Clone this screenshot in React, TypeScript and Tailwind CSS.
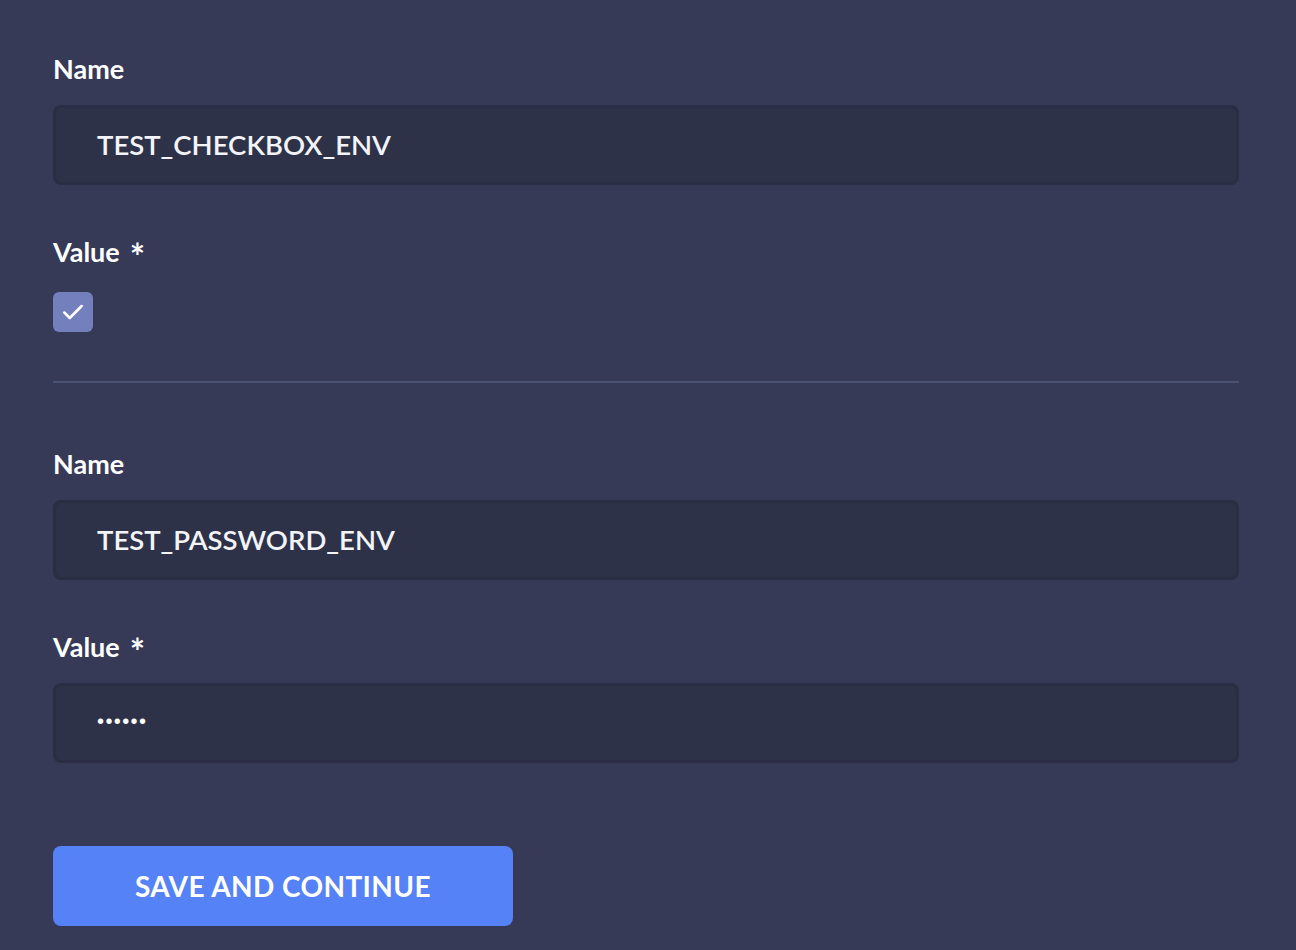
const font = { fontFamily: "Lato, 'Noto Sans', sans-serif" };

function Label({ text, required }: { text: string; required?: boolean }) {
    return (
        <div className="h-[30px] flex items-center text-[27px] font-bold text-white leading-none">
            {text}
            {required && <span className="ml-[10px] text-[36px] mt-[10px]">*</span>}
        </div>
    );
}

function TextField({ value }: { value: string }) {
    return (
        <div className="mt-[22px] h-[80px] rounded-lg bg-[#2e3249] border-[3px] border-[#2a2d43] flex items-center pl-[41px] text-[27.5px] font-semibold text-[#f3f4f8]">
            {value}
        </div>
    );
}

function PasswordField() {
    return (
        <div className="mt-[22px] h-[80px] rounded-lg bg-[#2e3249] border-[3px] border-[#2a2d43] flex items-center pl-[41px]">
            <span className="text-[20px] text-white leading-none -mt-[4px] tracking-[1.4px]" style={{ fontFamily: "'Liberation Sans', sans-serif" }}>
                ••••••
            </span>
        </div>
    );
}

export default function App() {
    return (
        <div className="w-[1296px] h-[950px] bg-[#363a56] px-[53px] pt-[53px] overflow-hidden" style={font}>
            <div className="w-[1186px] flex flex-col">

                {/* first env */}
                <Label text="Name" />
                <TextField value="TEST_CHECKBOX_ENV" />

                <div className="mt-[51px]">
                    <Label text="Value" required />
                </div>
                <div className="mt-[26px] w-10 h-10 rounded-md bg-[#7380bd] flex items-center justify-center">
                    <svg width="26" height="26" viewBox="0 0 24 24" fill="none" stroke="white" strokeWidth="2.4" strokeLinecap="round" strokeLinejoin="round">
                        <path d="M4 12.5l5 5L20 6.5" />
                    </svg>
                </div>

                <div className="mt-[49px] h-[2px] bg-[#4a5274]" />

                {/* second env */}
                <div className="mt-[65px]">
                    <Label text="Name" />
                </div>
                <TextField value="TEST_PASSWORD_ENV" />

                <div className="mt-[51px]">
                    <Label text="Value" required />
                </div>
                <PasswordField />

                <button className="mt-[83px] w-[460px] h-[80px] rounded-lg bg-[#5582f6] text-white text-[28px] font-bold uppercase tracking-[0.4px]">
                    Save and continue
                </button>
            </div>
        </div>
    );
}
